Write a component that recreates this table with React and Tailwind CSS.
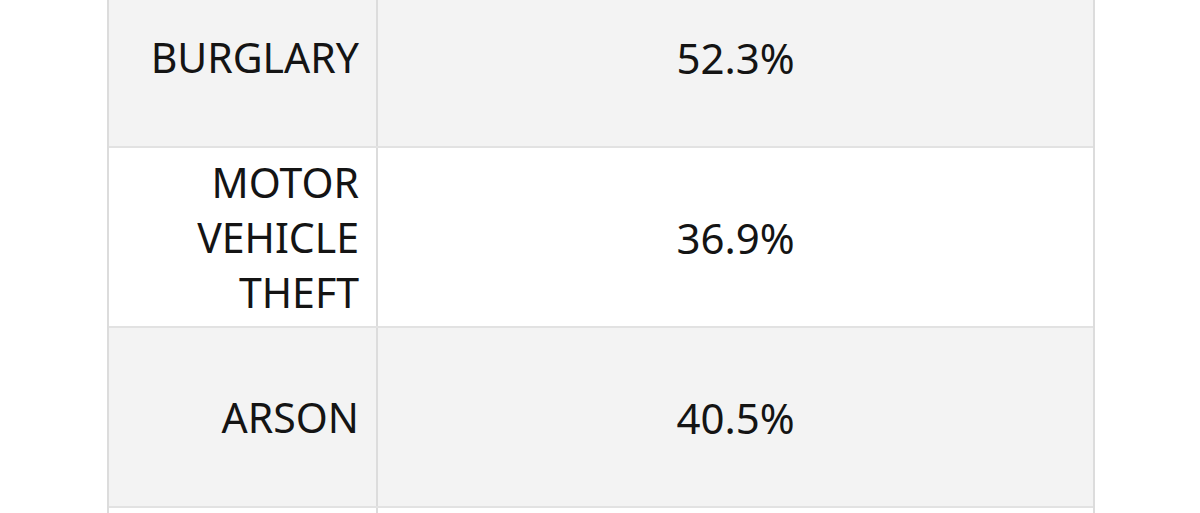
const rows = [
  { label: ['BURGLARY'], value: '52.3%', shade: true },
  { label: ['MOTOR', 'VEHICLE', 'THEFT'], value: '36.9%', shade: false },
  { label: ['ARSON'], value: '40.5%', shade: true },
  { label: [''], value: '', shade: false },
];

export default function App() {
  return (
    <div className="w-[1200px] h-[513px] overflow-hidden bg-white" style={{ fontFamily: '"Noto Sans", "Open Sans", sans-serif' }}>
      <div className="ml-[107px] -mt-[32px] w-[988px] border-x-2 border-[#dcdcdc] text-[#141414]">
        {rows.map((row, i) => (
          <div
            key={i}
            className={`grid grid-cols-[269px_1fr] h-[180px] border-b-2 border-[#e2e2e2] ${row.shade ? 'bg-[#f3f3f3]' : 'bg-white'}`}
          >
            <div className="flex items-center justify-end pr-[17px] border-r-2 border-[#dcdcdc] text-right text-[41px] leading-[55px]">
              <div>
                {row.label.map((l, j) => (
                  <div key={j}>{l}</div>
                ))}
              </div>
            </div>
            <div className="flex items-center justify-center text-[42px] leading-[55px]">{row.value}</div>
          </div>
        ))}
      </div>
    </div>
  );
}
